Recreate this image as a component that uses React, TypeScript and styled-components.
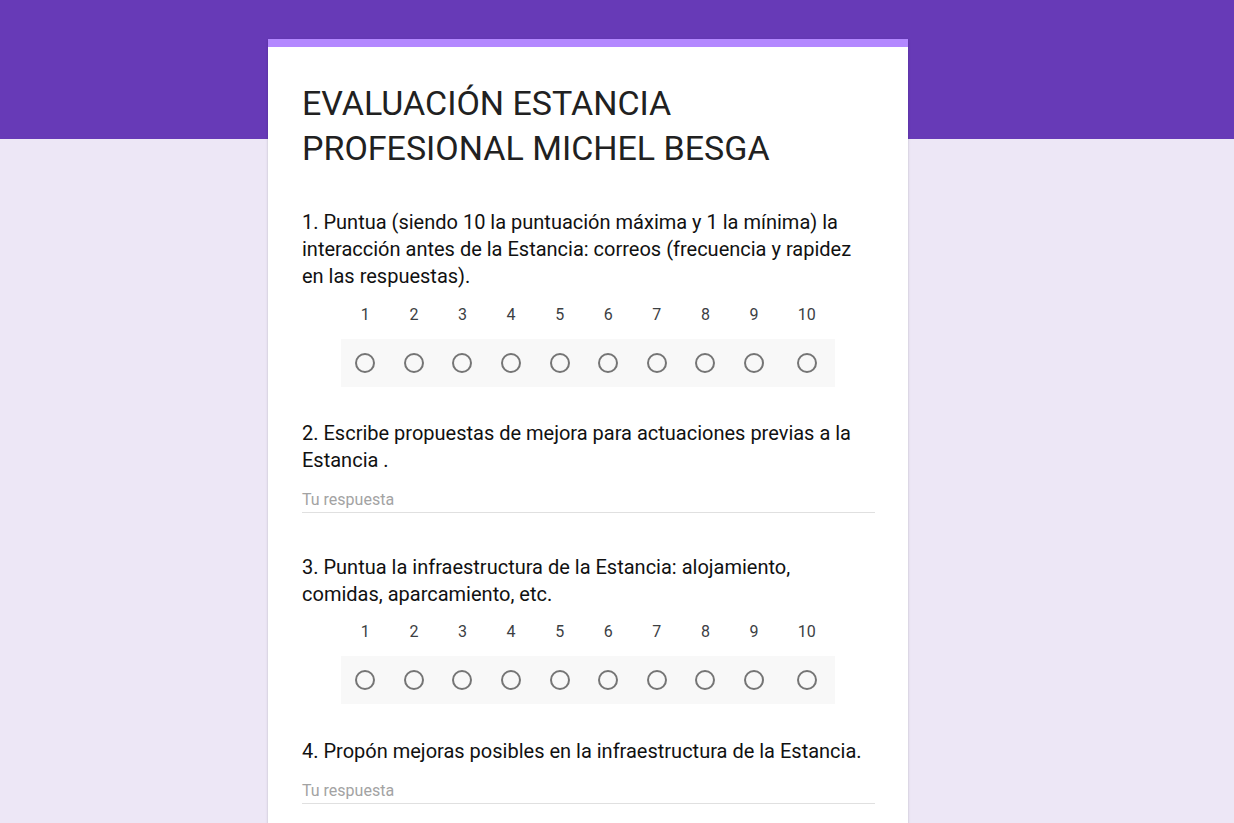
import React from "react";
import styled, { createGlobalStyle } from "styled-components";

const GlobalStyle = createGlobalStyle`
  html, body {
    margin: 0;
    padding: 0;
  }
  body {
    background: linear-gradient(#673ab7 0, #673ab7 139px, #ede7f6 139px, #ede7f6 100%);
    min-height: 823px;
    font-family: Roboto, "Noto Sans", Arial, sans-serif;
    color: #212121;
    overflow: hidden;
  }
`;

const Page = styled.div`
  display: flex;
  justify-content: flex-start;
  padding-top: 39px;
  padding-left: 268px;
  min-height: 823px;
  box-sizing: border-box;
`;

const Card = styled.main`
  width: 640px;
  background: #fff;
  border-top: 8px solid #b388ff;
  box-sizing: border-box;
  padding: 34px 35px 40px 34px;
  box-shadow: 0 2px 1px -1px rgba(0, 0, 0, 0.2), 0 1px 1px 0 rgba(0, 0, 0, 0.14),
    0 1px 3px 0 rgba(0, 0, 0, 0.12);
  align-self: flex-start;
`;

const Title = styled.h1`
  margin: 0 0 38px 0;
  font-size: 34px;
  font-weight: 400;
  line-height: 45px;
  color: #212121;
  letter-spacing: 0;
`;

const Item = styled.section<{ $extra?: number }>`
  margin-bottom: ${(p) => 33.5 + (p.$extra ?? 0)}px;
`;

const Question = styled.div`
  font-size: 20px;
  line-height: 27px;
  color: #111;
`;

const Scale = styled.div`
  margin-top: 12.5px;
  display: flex;
  flex-direction: column;
  align-items: flex-start;
  padding-left: 39px;
`;

const ScaleRow = styled.div<{ $shaded?: boolean }>`
  display: grid;
  grid-template-columns: repeat(9, 48.6px) 56.6px;
  align-items: center;
  height: ${(p) => (p.$shaded ? 48 : 24)}px;
  background: ${(p) => (p.$shaded ? "#f8f8f8" : "transparent")};
  margin-top: ${(p) => (p.$shaded ? 12 : 0)}px;
`;

const Num = styled.div`
  text-align: center;
  font-size: 16px;
  color: #3c4043;
  line-height: 24px;
`;

const RadioCell = styled.div`
  display: flex;
  justify-content: center;
  align-items: center;
`;

const Radio = styled.span`
  width: 20px;
  height: 20px;
  border: 2px solid #757575;
  border-radius: 50%;
  box-sizing: border-box;
  display: block;
`;

const Answer = styled.div`
  margin-top: 15px;
  height: 24px;
  box-sizing: border-box;
  border-bottom: 1px solid #e0e0e0;
  font-size: 16px;
  line-height: 22px;
  color: #a3a3a3;
  margin-right: -2px;
`;

const values = [1, 2, 3, 4, 5, 6, 7, 8, 9, 10];

function LinearScale() {
  return (
    <Scale>
      <ScaleRow>
        {values.map((v) => (
          <Num key={v}>{v}</Num>
        ))}
      </ScaleRow>
      <ScaleRow $shaded>
        {values.map((v) => (
          <RadioCell key={v}>
            <Radio />
          </RadioCell>
        ))}
      </ScaleRow>
    </Scale>
  );
}

export default function App() {
  return (
    <>
      <GlobalStyle />
      <Page>
        <Card>
          <Title>
            EVALUACIÓN ESTANCIA
            <br />
            PROFESIONAL MICHEL BESGA
          </Title>
          <Item>
            <Question>
              1. Puntua (siendo 10 la puntuación máxima y 1 la mínima) la interacción antes de la
              Estancia: correos (frecuencia y rapidez en las respuestas).
            </Question>
            <LinearScale />
          </Item>
          <Item $extra={7}>
            <Question>2. Escribe propuestas de mejora para actuaciones previas a la Estancia .</Question>
            <Answer>Tu respuesta</Answer>
          </Item>
          <Item>
            <Question>
              3. Puntua la infraestructura de la Estancia: alojamiento, comidas, aparcamiento, etc.
            </Question>
            <LinearScale />
          </Item>
          <Item>
            <Question>4. Propón mejoras posibles en la infraestructura de la Estancia.</Question>
            <Answer>Tu respuesta</Answer>
          </Item>
        </Card>
      </Page>
    </>
  );
}
